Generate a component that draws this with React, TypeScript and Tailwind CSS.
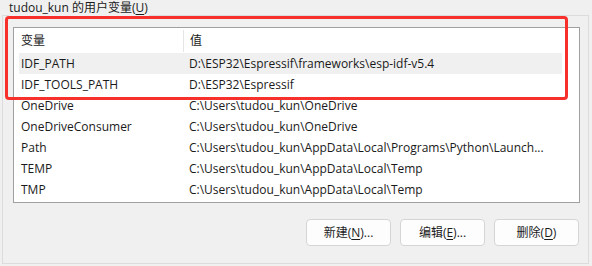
import React from "react";

type Row = { name: string; value: string; selected?: boolean };

const rows: Row[] = [
  { name: "IDF_PATH", value: "D:\\ESP32\\Espressif\\frameworks\\esp-idf-v5.4", selected: true },
  { name: "IDF_TOOLS_PATH", value: "D:\\ESP32\\Espressif" },
  { name: "OneDrive", value: "C:\\Users\\tudou_kun\\OneDrive" },
  { name: "OneDriveConsumer", value: "C:\\Users\\tudou_kun\\OneDrive" },
  { name: "Path", value: "C:\\Users\\tudou_kun\\AppData\\Local\\Programs\\Python\\Launch..." },
  { name: "TEMP", value: "C:\\Users\\tudou_kun\\AppData\\Local\\Temp" },
  { name: "TMP", value: "C:\\Users\\tudou_kun\\AppData\\Local\\Temp" },
];

function WinButton({ label, hotkey, suffix }: { label: string; hotkey: string; suffix: string }) {
  return (
    <button
      type="button"
      className="flex h-[27px] w-[85px] items-center justify-center rounded-[4px] border border-[#d5d5d5] bg-[#fdfdfd] text-[12px] text-[#1b1b1b]"
    >
      {label}(<span className="underline underline-offset-2">{hotkey}</span>){suffix}
    </button>
  );
}

export default function App() {
  return (
    <div
      className="relative h-[266px] w-[592px] overflow-hidden bg-[#f0f0f0] text-[12px] text-[#1a1a1a]"
      style={{ fontFamily: '"Open Sans", "Noto Sans CJK SC", sans-serif' }}
    >
      {/* group box */}
      <div className="ml-[2px] mt-[15px] h-[249px] w-[587px] border border-[#dcdcdc] pl-[10px] pt-[11px]">
        <div className="h-[176px] w-[567px] border border-[#a0a0a0] bg-white">
          <div className="flex h-[25px] items-center">
            <div className="w-[169px] pl-[7px]">变量</div>
            <div className="h-[22px] w-px bg-[#e5e5e5]" />
            <div className="pl-[6px]">值</div>
          </div>
          {rows.map((r) => (
            <div
              key={r.name}
              className={`mx-[5px] flex h-[21px] w-[543px] items-center ${r.selected ? "bg-[#f0f0f0]" : ""}`}
            >
              <div className="w-[170px] pl-[2px] leading-none">{r.name}</div>
              <div className="leading-none whitespace-nowrap">{r.value}</div>
            </div>
          ))}
        </div>
        <div className="mt-[16px] flex justify-end gap-[9px] pr-[9px]">
          <WinButton label="新建" hotkey="N" suffix="..." />
          <WinButton label="编辑" hotkey="E" suffix="..." />
          <WinButton label="删除" hotkey="D" suffix="" />
        </div>
      </div>

      {/* group label over the border line */}
      <div className="absolute left-[9px] top-0 bg-[#f0f0f0] pr-[1px] text-[12px] leading-[16px]">
        tudou_kun 的用户变量(<span className="underline underline-offset-2">U</span>)
      </div>

      {/* red annotation box */}
      <div className="pointer-events-none absolute left-[5px] top-[16px] h-[84px] w-[563px] rounded-[4px] border-[3px] border-[#f8302c]" />
    </div>
  );
}
